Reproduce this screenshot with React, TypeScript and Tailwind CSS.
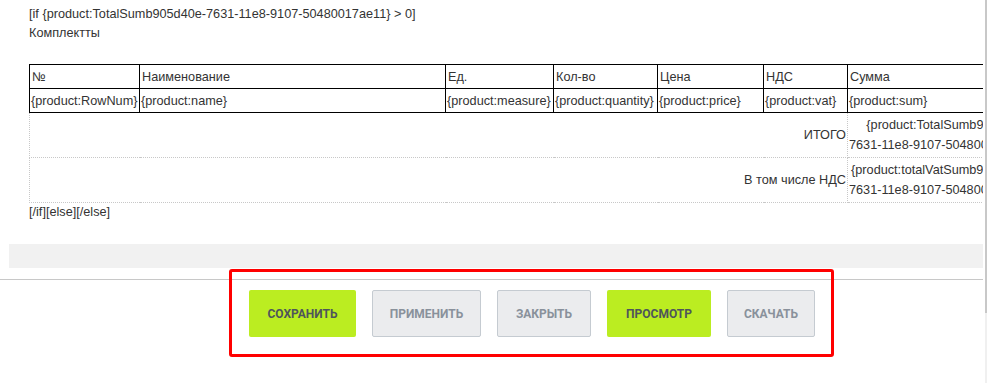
import React from "react";

const headers = ["№", "Наименование", "Ед.", "Кол-во", "Цена", "НДС", "Сумма"];
const fields = [
  "{product:RowNum}",
  "{product:name}",
  "{product:measure}",
  "{product:quantity}",
  "{product:price}",
  "{product:vat}",
  "{product:sum}",
];
const colWidths = ["w-[110px]", "w-[306px]", "w-[108px]", "w-[104px]", "w-[106px]", "w-[84px]", "w-[184px]"];

const buttons = [
  { label: "СОХРАНИТЬ", primary: true, w: "w-[107px]" },
  { label: "ПРИМЕНИТЬ", primary: false, w: "w-[109px]" },
  { label: "ЗАКРЫТЬ", primary: false, w: "w-[94px]" },
  { label: "ПРОСМОТР", primary: true, w: "w-[104px]" },
  { label: "СКАЧАТЬ", primary: false, w: "w-[88px]" },
];

export default function App() {
  return (
    <div className="relative flex w-[987px] h-[383px] overflow-hidden bg-white">
      <div className="w-[983px] shrink-0 flex flex-col">
        {/* editor body */}
        <div className="h-[244px] overflow-hidden pl-[29px] pt-[5px] text-[12.7px] leading-[19px] text-[#333] font-['Liberation_Sans',Arial,sans-serif]">
          <p>[if {"{"}product:TotalSumb905d40e-7631-11e8-9107-50480017ae11{"}"} &gt; 0]</p>
          <p>Комплектты</p>

          <table className="mt-[21px] table-fixed border-collapse w-[1002px]">
            <colgroup>
              {colWidths.map((w, i) => (
                <col key={i} className={w} />
              ))}
            </colgroup>
            <tbody>
              <tr className="h-[24px]">
                {headers.map((h) => (
                  <td key={h} className="border border-black px-[2px] py-0 leading-[20px] whitespace-nowrap">
                    {h}
                  </td>
                ))}
              </tr>
              <tr className="h-[24px]">
                {fields.map((f) => (
                  <td key={f} className="border border-black px-px py-0 leading-[20px] whitespace-nowrap">
                    {f}
                  </td>
                ))}
              </tr>
              <tr className="h-[45px]">
                <td colSpan={6} className="border border-dotted border-[#c8c8c8] pr-px text-right align-middle leading-[20px]">
                  ИТОГО
                </td>
                <td className="border border-dotted border-[#c8c8c8] px-px text-right align-middle leading-[20px] whitespace-nowrap">
                  {"{"}product:TotalSumb905d40e-
                  <br />
                  7631-11e8-9107-50480017ae11{"}"}
                </td>
              </tr>
              <tr className="h-[45px]">
                <td colSpan={6} className="border border-dotted border-[#c8c8c8] pr-px text-right align-middle leading-[20px]">
                  В том числе НДС
                </td>
                <td className="border border-dotted border-[#c8c8c8] px-px text-right align-middle leading-[20px] whitespace-nowrap">
                  {"{"}product:totalVatSumb905d40e-
                  <br />
                  7631-11e8-9107-50480017ae11{"}"}
                </td>
              </tr>
            </tbody>
          </table>

          <p>[/if][else][/else]</p>
        </div>

        {/* status bar */}
        <div className="ml-[9px] h-[24px] bg-[#f1f1f1]" />

        <div className="mt-[11px] h-px bg-[#c8c8c8]" />

        {/* action buttons */}
        <div className="mt-[10px] ml-[249px] flex gap-4 font-['Roboto',Arial,sans-serif]">
          {buttons.map((b) => (
            <button
              key={b.label}
              className={`${b.w} h-[47px] rounded-[2px] text-[12px] font-bold ${
                b.primary
                  ? "bg-[#bbed21] text-[#4f555b]"
                  : "bg-[#ebecee] border border-[#c5cbd1] text-[#89919b]"
              }`}
            >
              {b.label}
            </button>
          ))}
        </div>
      </div>

      {/* scrollbar */}
      <div className="ml-[2px] w-[2px] flex flex-col">
        <div className="h-[313px] bg-[#c8c8c8]" />
        <div className="flex-1 bg-[#f0f0f0]" />
      </div>

      {/* annotation frame */}
      <div className="absolute left-[229px] top-[269px] w-[605px] h-[88px] border-[3px] border-[#ff0000] rounded-[3px] pointer-events-none" />
    </div>
  );
}
